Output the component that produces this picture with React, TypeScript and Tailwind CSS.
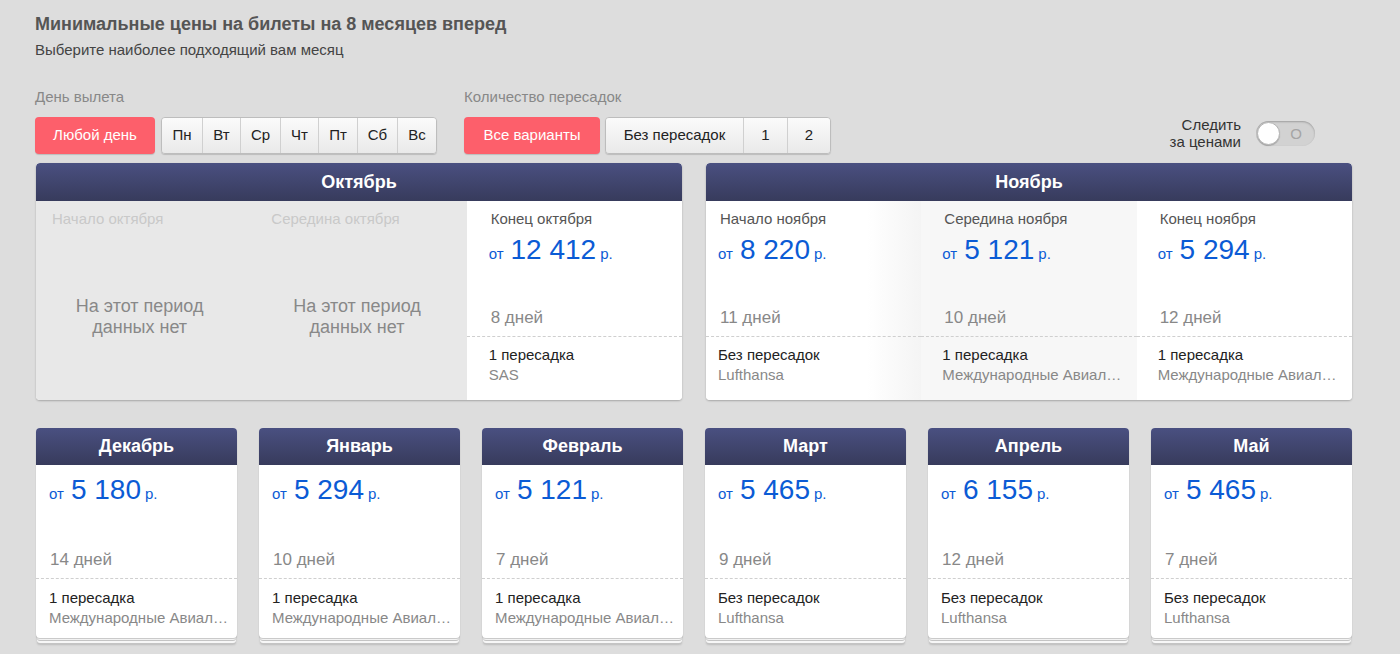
import React from "react"

type Period = {
  label: string
  price?: string
  days?: string
  transfer?: string
  airline?: string
  pad: string
  bg: string
}

const october: Period[] = [
  { label: "Начало октября", pad: "pl-[16px]", bg: "bg-[#e8e8e8]" },
  { label: "Середина октября", pad: "pl-[20px]", bg: "bg-[#e8e8e8]" },
  {
    label: "Конец октября",
    price: "12 412",
    days: "8 дней",
    transfer: "1 пересадка",
    airline: "SAS",
    pad: "pl-[22px]",
    bg: "bg-white",
  },
]

const november: Period[] = [
  {
    label: "Начало ноября",
    price: "8 220",
    days: "11 дней",
    transfer: "Без пересадок",
    airline: "Lufthansa",
    pad: "pl-[12px]",
    bg: "bg-linear-to-r from-white from-75% to-[#f4f4f4]",
  },
  {
    label: "Середина ноября",
    price: "5 121",
    days: "10 дней",
    transfer: "1 пересадка",
    airline: "Международные Авиалинии Украины",
    pad: "pl-[21px]",
    bg: "bg-[#f7f7f7]",
  },
  {
    label: "Конец ноября",
    price: "5 294",
    days: "12 дней",
    transfer: "1 пересадка",
    airline: "Международные Авиалинии Украины",
    pad: "pl-[21px]",
    bg: "bg-white",
  },
]

const months = [
  { name: "Декабрь", price: "5 180", days: "14 дней", transfer: "1 пересадка", airline: "Международные Авиалинии Украины" },
  { name: "Январь", price: "5 294", days: "10 дней", transfer: "1 пересадка", airline: "Международные Авиалинии Украины" },
  { name: "Февраль", price: "5 121", days: "7 дней", transfer: "1 пересадка", airline: "Международные Авиалинии Украины" },
  { name: "Март", price: "5 465", days: "9 дней", transfer: "Без пересадок", airline: "Lufthansa" },
  { name: "Апрель", price: "6 155", days: "12 дней", transfer: "Без пересадок", airline: "Lufthansa" },
  { name: "Май", price: "5 465", days: "7 дней", transfer: "Без пересадок", airline: "Lufthansa" },
]

const days = [
  { d: "Пн", w: "w-[40px]" },
  { d: "Вт", w: "w-[38px]" },
  { d: "Ср", w: "w-[40px]" },
  { d: "Чт", w: "w-[38px]" },
  { d: "Пт", w: "w-[39px]" },
  { d: "Сб", w: "w-[40px]" },
  { d: "Вс", w: "w-[39px]" },
]

const stops = [
  { d: "Без пересадок", w: "w-[137px]" },
  { d: "1", w: "w-[44px]" },
  { d: "2", w: "w-[43px]" },
]

function Price({ value }: { value: string }) {
  return (
    <div className="flex h-[32px] items-baseline leading-[32px] text-[#0b5bd5]">
      <span className="text-[15px]">от</span>
      <span className="ml-[7px] text-[28px]">{value}</span>
      <span className="ml-[4px] text-[15px]">р.</span>
    </div>
  )
}

function Header({ name, tall }: { name: string; tall?: boolean }) {
  return (
    <div
      className={`flex items-center justify-center rounded-t-[4px] bg-linear-to-b from-[#4a5081] to-[#373b5c] text-[18px] font-bold text-white ${
        tall ? "h-[38px]" : "h-[37px]"
      }`}
    >
      {name}
    </div>
  )
}

function Segmented({ items }: { items: { d: string; w: string }[] }) {
  return (
    <div className="flex h-[37px] overflow-hidden rounded-[4px] border border-[#bdbdbd] shadow-[0_1px_1px_rgba(0,0,0,0.15)]">
      {items.map((it, i) => (
        <button
          key={it.d}
          className={`${it.w} flex items-center justify-center bg-linear-to-b from-[#fbfbfb] to-[#e9e9e9] text-[15px] text-[#222] ${
            i > 0 ? "border-l border-[#d0d0d0]" : ""
          }`}
        >
          {it.d}
        </button>
      ))}
    </div>
  )
}

function RedButton({ label, w }: { label: string; w: string }) {
  return (
    <button
      className={`${w} flex h-[37px] items-center justify-center rounded-[4px] bg-[#fd5f6b] text-[15px] text-white shadow-[0_1px_1px_rgba(0,0,0,0.15)]`}
    >
      {label}
    </button>
  )
}

function PeriodCell({ p }: { p: Period }) {
  if (!p.price) {
    return (
      <div className={`flex h-[199px] flex-col ${p.bg} ${p.pad}`}>
        <div className="mt-[9px] text-[15px] leading-[18px] text-[#c9c9c9]">{p.label}</div>
        <div className="mt-[68px] pr-[24px] text-center text-[18px] leading-[21px] text-[#888]">
          На этот период
          <br />
          данных нет
        </div>
      </div>
    )
  }
  return (
    <div className={`flex flex-col ${p.bg}`}>
      <div className={`flex h-[135px] flex-col ${p.pad}`}>
        <div className="ml-[2px] mt-[9px] text-[15px] leading-[18px] text-[#555]">{p.label}</div>
        <div className="mt-[6px]">
          <Price value={p.price} />
        </div>
        <div className="flex-1" />
        <div className="mb-[8px] ml-[2px] text-[17px] leading-[20px] text-[#888]">{p.days}</div>
      </div>
      <div className={`h-[64px] border-t border-dashed border-[#cfcfcf] pt-[8px] pr-[12px] ${p.pad}`}>
        <div className="truncate text-[15px] leading-[20px] text-[#222]">{p.transfer}</div>
        <div className="truncate text-[15px] leading-[20px] text-[#888]">{p.airline}</div>
      </div>
    </div>
  )
}

function BigCard({ name, cells }: { name: string; cells: Period[] }) {
  return (
    <div className="w-[646px] overflow-hidden rounded-[4px] bg-white shadow-[0_1px_2px_rgba(0,0,0,0.25)]">
      <Header name={name} tall />
      <div className="grid grid-cols-3">
        {cells.map((c) => (
          <PeriodCell key={c.label} p={c} />
        ))}
      </div>
    </div>
  )
}

function SmallCard({ m }: { m: (typeof months)[number] }) {
  return (
    <div className="w-[201px] rounded-[4px] bg-white shadow-[0_1px_1px_rgba(0,0,0,0.2),0_3px_0_-1px_#f7f7f7,0_4px_0_-1px_#c4c4c4,0_6px_0_-1px_#f7f7f7,0_7px_0_-1px_#c4c4c4,0_8px_2px_-1px_rgba(0,0,0,0.15)]">
      <Header name={m.name} />
      <div className="flex h-[113px] flex-col pl-[13px]">
        <div className="mt-[9px]">
          <Price value={m.price} />
        </div>
        <div className="flex-1" />
        <div className="mb-[8px] ml-[1px] text-[17px] leading-[20px] text-[#888]">{m.days}</div>
      </div>
      <div className="h-[60px] border-t border-dashed border-[#cfcfcf] pl-[13px] pr-[6px] pt-[9px]">
        <div className="truncate text-[15px] leading-[20px] text-[#222]">{m.transfer}</div>
        <div className="truncate text-[15px] leading-[20px] text-[#888]">{m.airline}</div>
      </div>
    </div>
  )
}

export default function App() {
  return (
    <div className="h-[654px] w-[1400px] overflow-hidden bg-[#dddddd] pl-[36px] pr-[48px] font-['Liberation_Sans',Arial,sans-serif]">
      <h1 className="-ml-px pt-[14px] text-[18px] font-bold leading-[20px] text-[#555]">
        Минимальные цены на билеты на 8 месяцев вперед
      </h1>
      <p className="-ml-px mt-[7px] text-[15px] leading-[18px] text-[#444]">Выберите наиболее подходящий вам месяц</p>

      <div className="mt-[29px] flex items-end">
        <div className="-ml-px flex flex-col">
          <div className="text-[15px] leading-[18px] text-[#888]">День вылета</div>
          <div className="mt-[11px] flex gap-[6px]">
            <RedButton label="Любой день" w="w-[120px]" />
            <Segmented items={days} />
          </div>
        </div>
        <div className="ml-[27px] flex flex-col">
          <div className="text-[15px] leading-[18px] text-[#888]">Количество пересадок</div>
          <div className="mt-[11px] flex gap-[5px]">
            <RedButton label="Все варианты" w="w-[136px]" />
            <Segmented items={stops} />
          </div>
        </div>
        <div className="mb-[4px] ml-auto mr-[37px] flex items-center gap-[15px]">
          <div className="text-right text-[15px] leading-[17px] text-[#333]">
            Следить
            <br />
            за ценами
          </div>
          <div className="relative h-[25px] w-[59px] rounded-full bg-[#d2d2d2] shadow-[inset_0_1px_2px_rgba(0,0,0,0.25)]">
            <div className="absolute left-[1px] top-[1px] h-[23px] w-[23px] rounded-full border border-[#b5b5b5] bg-white shadow-[0_1px_1px_rgba(0,0,0,0.2)]" />
            <span className="absolute right-[13px] top-[3px] text-[15px] leading-[19px] text-[#a5a5a5]">O</span>
          </div>
        </div>
      </div>

      <div className="mt-[9px] flex gap-[24px]">
        <BigCard name="Октябрь" cells={october} />
        <BigCard name="Ноябрь" cells={november} />
      </div>

      <div className="mt-[28px] flex gap-[22px]">
        {months.map((m) => (
          <SmallCard key={m.name} m={m} />
        ))}
      </div>
    </div>
  )
}
